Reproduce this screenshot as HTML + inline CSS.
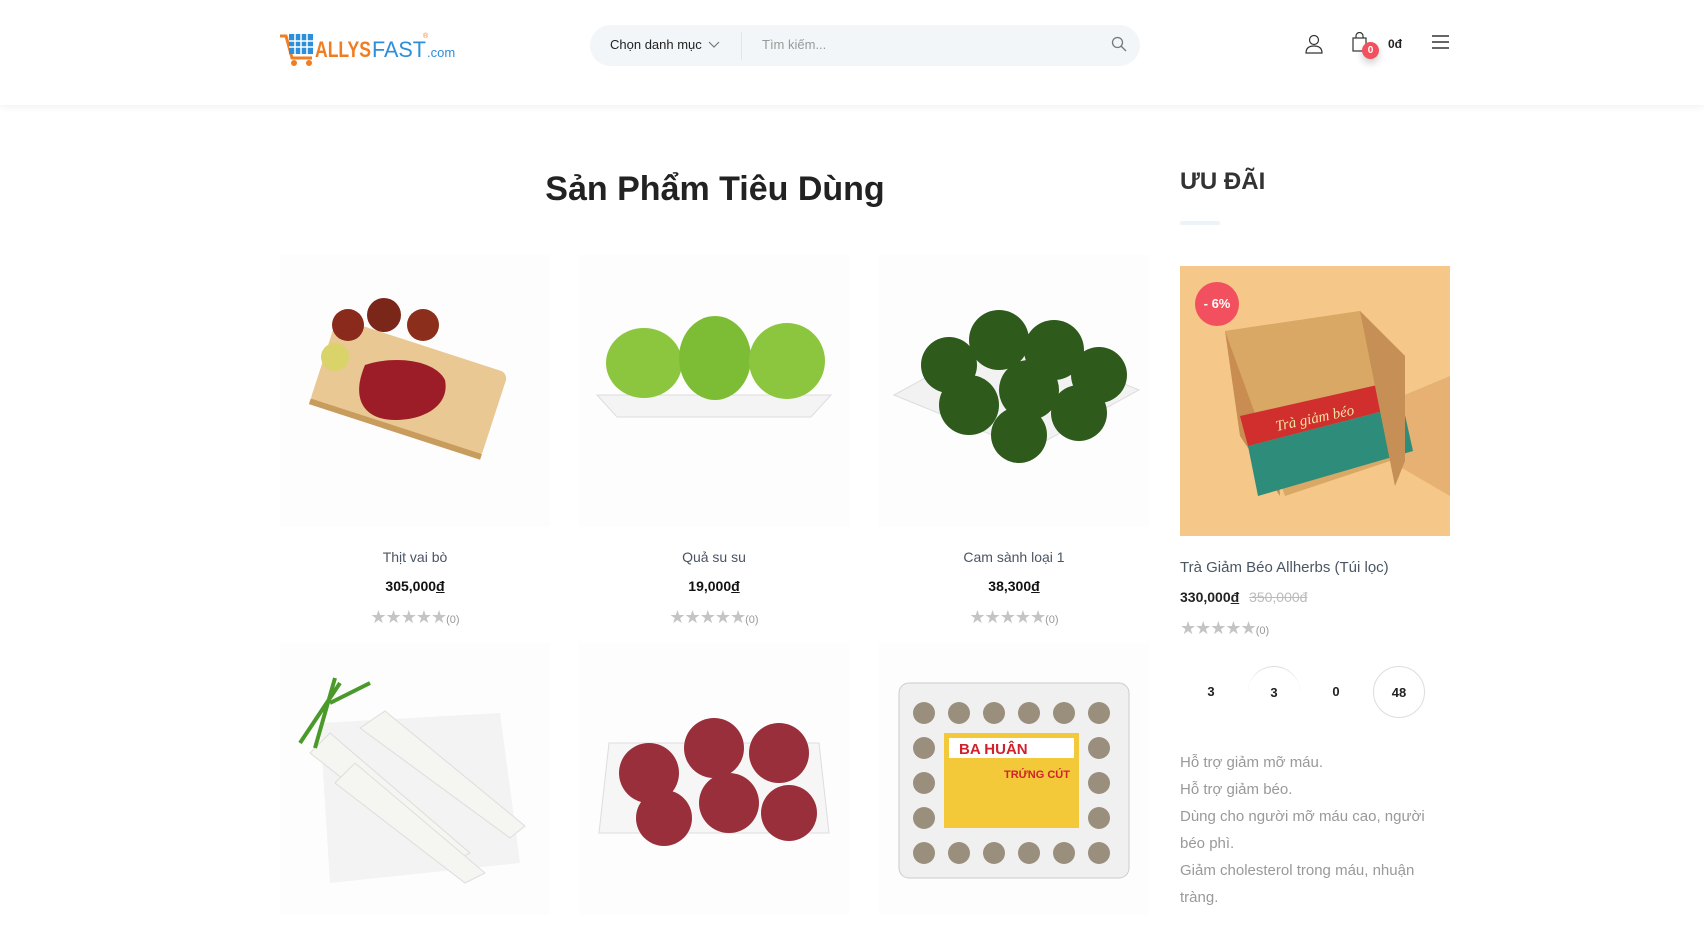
<!DOCTYPE html>
<html><head><meta charset="utf-8"><style>
*{margin:0;padding:0;box-sizing:border-box}
body{width:1704px;height:927px;overflow:hidden;background:#fff;font-family:"Liberation Sans",sans-serif;position:relative;color:#222}
.abs{position:absolute}
.hdr{left:0;top:0;width:1704px;height:105px;background:#fff;box-shadow:0 2px 8px rgba(0,0,0,.06)}
.search{left:590px;top:25px;width:550px;height:41px;border-radius:21px;background:#f3f6f9}
.name{font-size:14px;color:#4a5563;text-align:center;width:270px}
.price{font-size:14px;font-weight:bold;text-align:center;width:270px;color:#111}
.stars{font-size:18px;color:#c4c4c4;text-align:center;width:270px;letter-spacing:-1px;line-height:18px}
.stars small{font-size:11px;letter-spacing:0;color:#999}
.img{width:270px;height:272px;background:#fdfdfd;overflow:hidden}
.side p{font-size:15px;color:#999;line-height:27px}
.cd{width:52px;height:52px;text-align:center;line-height:52px;font-size:13px;font-weight:bold;border-radius:50%}
</style></head><body>
<div class="abs hdr"></div>
<svg class="abs" style="left:278px;top:30px" width="205" height="38" viewBox="0 0 205 38">
<path d="M2 6h6l6 22h20" fill="none" stroke="#f07d21" stroke-width="3"/>
<rect x="11" y="4" width="24" height="20" fill="#2b8fdb"/>
<path d="M17 4v20M23 4v20M29 4v20M11 11h24M11 17h24" stroke="#fff" stroke-width="1.5"/>
<circle cx="16" cy="33" r="3" fill="#f07d21"/><circle cx="31" cy="33" r="3" fill="#f07d21"/>
<text x="37" y="27" font-family="Liberation Sans Narrow, Liberation Sans" font-weight="bold" font-size="22" fill="#f07d21" textLength="56" lengthAdjust="spacingAndGlyphs">ALLYS</text>
<text x="94" y="27" font-family="Liberation Sans Narrow, Liberation Sans" font-size="22" fill="#2b8fdb" textLength="54" lengthAdjust="spacingAndGlyphs">FAST</text>
<text x="149" y="27" font-family="Liberation Sans" font-size="13" fill="#2b8fdb">.com</text>
<text x="145" y="8" font-family="Liberation Sans" font-size="7" fill="#f07d21">®</text>
</svg>
<div class="abs search"></div>
<div class="abs" style="left:610px;top:37px;font-size:13px;color:#222">Chọn danh mục</div>
<svg class="abs" style="left:708px;top:41px" width="12" height="8"><path d="M1 1l5 5 5-5" fill="none" stroke="#777" stroke-width="1.2"/></svg>
<div class="abs" style="left:741px;top:32px;width:1px;height:28px;background:#e2e6ea"></div>
<div class="abs" style="left:762px;top:37px;font-size:13px;color:#999">Tìm kiếm...</div>
<svg class="abs" style="left:1111px;top:36px" width="16" height="16"><circle cx="6.5" cy="6.5" r="5" fill="none" stroke="#777" stroke-width="1.3"/><path d="M10 10l5 5" stroke="#777" stroke-width="1.3"/></svg>
<svg class="abs" style="left:1304px;top:34px" width="20" height="20"><circle cx="10" cy="6" r="4.5" fill="none" stroke="#333" stroke-width="1.2"/><path d="M2 19c0-5 3-7 8-7s8 2 8 7z" fill="none" stroke="#333" stroke-width="1.2"/></svg>
<svg class="abs" style="left:1351px;top:32px" width="18" height="20"><rect x="2" y="6" width="13" height="13" fill="none" stroke="#333" stroke-width="1.2"/><path d="M5 6V4a3.5 3.5 0 0 1 7 0v2" fill="none" stroke="#333" stroke-width="1.2"/></svg>
<div class="abs" style="left:1362px;top:42px;width:17px;height:17px;border-radius:50%;background:#f2505f;color:#fff;font-size:10px;font-weight:bold;text-align:center;line-height:17px;box-shadow:0 4px 8px rgba(0,0,0,.2)">0</div>
<div class="abs" style="left:1388px;top:37px;font-size:12px;font-weight:bold">0đ</div>
<svg class="abs" style="left:1432px;top:35px" width="17" height="14"><path d="M0 1h17M0 7h17M0 13h17" stroke="#333" stroke-width="1.5"/></svg>

<div class="abs" style="left:440px;top:170px;width:550px;text-align:center;font-size:34px;font-weight:bold;color:#222">Sản Phẩm Tiêu Dùng</div>

<div class="abs img" style="left:280px;top:255px">
<svg width="270" height="272"><g transform="rotate(18 135 130)"><rect x="40" y="90" width="180" height="90" rx="8" fill="#e9c893"/><rect x="40" y="175" width="180" height="6" fill="#c79c5c"/></g>
<path d="M85 110c30-10 70-5 80 15 5 25-20 40-50 40-30 0-45-20-30-55z" fill="#9c1d28"/>
<circle cx="68" cy="70" r="16" fill="#8a2a1c"/><circle cx="104" cy="60" r="17" fill="#7a2618"/><circle cx="143" cy="70" r="16" fill="#8c2e1c"/>
<circle cx="55" cy="102" r="14" fill="#d9d36a"/></svg></div>
<div class="abs img" style="left:579px;top:255px">
<svg width="270" height="272"><path d="M18 140h234l-20 22H38z" fill="#f4f4f4" stroke="#ddd"/>
<ellipse cx="65" cy="108" rx="38" ry="35" fill="#8cc63e"/><ellipse cx="136" cy="103" rx="36" ry="42" fill="#7dbd35"/><ellipse cx="208" cy="106" rx="38" ry="38" fill="#8cc63e"/></svg></div>
<div class="abs img" style="left:879px;top:255px">
<svg width="270" height="272"><path d="M15 140l110-60 135 55-110 60z" fill="#f2f2f2" stroke="#ddd"/>
<g fill="#2e5a1c"><circle cx="70" cy="110" r="28"/><circle cx="120" cy="85" r="30"/><circle cx="175" cy="95" r="30"/><circle cx="220" cy="120" r="28"/><circle cx="90" cy="150" r="30"/><circle cx="150" cy="135" r="30"/><circle cx="200" cy="158" r="28"/><circle cx="140" cy="180" r="28"/></g></svg></div>
<div class="abs name" style="left:280px;top:549px">Thịt vai bò</div>
<div class="abs name" style="left:579px;top:549px">Quả su su</div>
<div class="abs name" style="left:879px;top:549px">Cam sành loại 1</div>
<div class="abs price" style="left:280px;top:578px">305,000<u>đ</u></div>
<div class="abs price" style="left:579px;top:578px">19,000<u>đ</u></div>
<div class="abs price" style="left:879px;top:578px">38,300<u>đ</u></div>
<div class="abs stars" style="left:280px;top:608px">★★★★★<small>(0)</small></div>
<div class="abs stars" style="left:579px;top:608px">★★★★★<small>(0)</small></div>
<div class="abs stars" style="left:879px;top:608px">★★★★★<small>(0)</small></div>

<div class="abs img" style="left:280px;top:643px">
<svg width="270" height="290"><path d="M40 80l180-10 20 150-190 20z" fill="#f3f3f3"/>
<g fill="#f5f5f2" stroke="#ddd"><path d="M30 110l140 110 20-10-140-120z"/><path d="M80 85l150 110 15-12-140-115z"/><path d="M55 140l130 100 20-10-130-110z"/></g>
<path d="M20 100l40-60M35 105l20-70M50 60l40-20" stroke="#4a9a2a" stroke-width="4"/></svg></div>
<div class="abs img" style="left:579px;top:643px">
<svg width="270" height="290"><path d="M30 100h210l10 90H20z" fill="#f6f6f6" stroke="#ddd"/>
<g fill="#9a2f3c"><circle cx="70" cy="130" r="30"/><circle cx="135" cy="105" r="30"/><circle cx="200" cy="110" r="30"/><circle cx="85" cy="175" r="28"/><circle cx="150" cy="160" r="30"/><circle cx="210" cy="170" r="28"/></g></svg></div>
<div class="abs img" style="left:879px;top:643px">
<svg width="270" height="290"><rect x="20" y="40" width="230" height="195" rx="10" fill="#f0f0f0" stroke="#ccc"/>
<g fill="#9a8f7d"><circle cx="45" cy="70" r="11"/><circle cx="80" cy="70" r="11"/><circle cx="115" cy="70" r="11"/><circle cx="150" cy="70" r="11"/><circle cx="185" cy="70" r="11"/><circle cx="220" cy="70" r="11"/><circle cx="45" cy="105" r="11"/><circle cx="45" cy="140" r="11"/><circle cx="45" cy="175" r="11"/><circle cx="220" cy="105" r="11"/><circle cx="220" cy="140" r="11"/><circle cx="220" cy="175" r="11"/><circle cx="45" cy="210" r="11"/><circle cx="80" cy="210" r="11"/><circle cx="115" cy="210" r="11"/><circle cx="150" cy="210" r="11"/><circle cx="185" cy="210" r="11"/><circle cx="220" cy="210" r="11"/></g>
<rect x="65" y="90" width="135" height="95" fill="#f3c93a"/><rect x="70" y="95" width="125" height="20" fill="#fff"/>
<text x="80" y="111" font-family="Liberation Sans" font-weight="bold" font-size="15" fill="#d0222a">BA HUÂN</text>
<text x="125" y="135" font-family="Liberation Sans" font-weight="bold" font-size="11" fill="#d0222a">TRỨNG CÚT</text></svg></div>

<div class="abs" style="left:1180px;top:168px;font-size:24px;font-weight:bold;color:#333">ƯU ĐÃI</div>
<div class="abs" style="left:1180px;top:221px;width:40px;height:4px;border-radius:2px;background:#eef3f8"></div>
<div class="abs" style="left:1180px;top:266px;width:270px;height:270px;background:#f5c88a;overflow:hidden">
<svg width="270" height="270"><path d="M150 160l120-50v120z" fill="#e6b173"/>
<path d="M45 65l135-20 45 45-130 30z" fill="#d7a66a"/><path d="M45 65l50 55 5 110-40-60z" fill="#c98d52"/>
<path d="M45 65l135-20 45 145-120 40z" fill="#d9a865"/>
<path d="M60 150l155-35 8 25-155 40z" fill="#d12e2e"/><path d="M68 180l155-40 10 45-155 45z" fill="#2e8c7a"/>
<path d="M180 45l45 45 0 105-10 25z" fill="#c58f55"/>
<text x="95" y="160" font-family="Liberation Serif" font-style="italic" font-size="15" fill="#f5e3a0" transform="rotate(-12 120 155)">Trà giảm béo</text></svg>
<div class="abs" style="left:15px;top:16px;width:44px;height:44px;border-radius:50%;background:#f2505f;color:#fff;font-size:13px;font-weight:bold;text-align:center;line-height:44px">- 6%</div>
</div>
<div class="abs" style="left:1180px;top:559px;font-size:15px;color:#4a5563">Trà Giảm Béo Allherbs (Túi lọc)</div>
<div class="abs" style="left:1180px;top:589px;font-size:14px;font-weight:bold">330,000<u>đ</u> <span style="color:#bbb;font-weight:normal;text-decoration:line-through;margin-left:6px">350,000đ</span></div>
<div class="abs stars" style="left:1180px;top:619px;width:auto;text-align:left">★★★★★<small>(0)</small></div>
<div class="abs cd" style="left:1185px;top:666px">3</div>
<div class="abs cd" style="left:1248px;top:666px;border-top:1px solid #ddd">3</div>
<div class="abs cd" style="left:1310px;top:666px">0</div>
<div class="abs cd" style="left:1373px;top:666px;border:1px solid #ddd">48</div>
<div class="abs side" style="left:1180px;top:749px;width:260px">
<p>Hỗ trợ giảm mỡ máu.</p><p>Hỗ trợ giảm béo.</p><p>Dùng cho người mỡ máu cao, người béo phì.</p><p>Giảm cholesterol trong máu, nhuận tràng.</p></div>
</body></html>
